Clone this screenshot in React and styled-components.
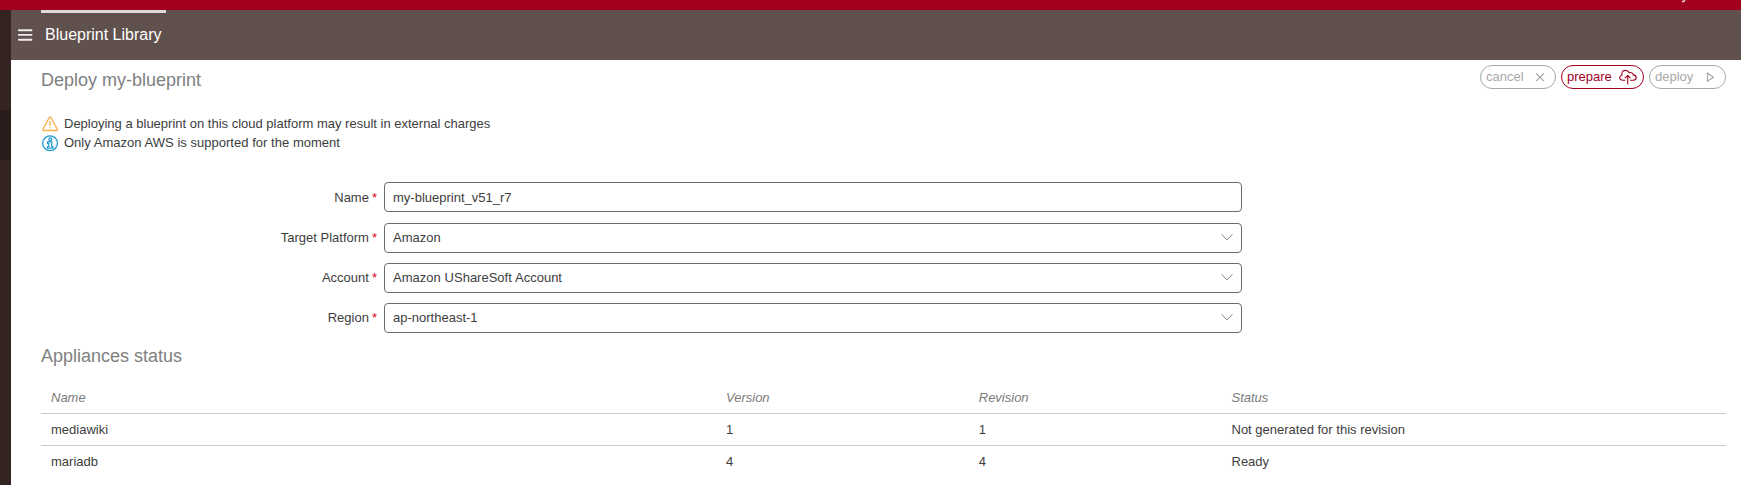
import React from "react";
import styled, { createGlobalStyle } from "styled-components";

const GlobalStyle = createGlobalStyle`
  * { box-sizing: border-box; }
  body {
    margin: 0;
    background: #fff;
    color: #3d3d3d;
    font: 13px/19px "Liberation Sans", Arial, sans-serif;
    overflow: hidden;
  }
`;

const Page = styled.div`
  display: flex;
  flex-direction: column;
  height: 485px;
`;

const TopBar = styled.div`
  display: flex;
  flex: none;
  justify-content: flex-end;
  height: 10px;
  padding-right: 55px;
  background: #a1001f;
  svg { display: block; }
`;

const Body = styled.div`
  display: flex;
  flex: 1;
  min-height: 0;
`;

const SideBar = styled.aside`
  flex: none;
  width: 11px;
  padding-top: 100px;
  background: #332421;
`;

const SideItem = styled.div`
  height: 50px;
  background: #291c1b;
`;

const Main = styled.main`
  flex: 1;
  min-width: 0;
`;

const Header = styled.header`
  display: flex;
  height: 50px;
  padding-left: 6px;
  background: #61514e;
  color: #fff;
`;

const MenuButton = styled.div`
  width: 24px;
  padding-top: 18px;
  svg { display: block; }
`;

const Tab = styled.div`
  width: 125px;
  padding: 10px 0 0 4px;
  border-top: 3px solid #dcdada;
  font-size: 16px;
  line-height: 24px;
  white-space: nowrap;
`;

const Content = styled.div`
  padding: 5px 15px 0 30px;
`;

const TitleRow = styled.div`
  display: flex;
  justify-content: space-between;
  align-items: flex-start;
  height: 49px;
`;

const Title = styled.h1`
  margin: 0;
  padding-top: ${(p) => p.$top || 0}px;
  color: #808080;
  font-size: 18px;
  font-weight: normal;
  line-height: 22px;
`;

const Actions = styled.div`
  display: flex;
  gap: 5px;
`;

const Action = styled.button`
  display: flex;
  align-items: center;
  justify-content: space-between;
  width: ${(p) => p.$width}px;
  height: 24px;
  padding: 0 ${(p) => p.$end}px 1px 5px;
  border: 1px solid currentColor;
  border-radius: 12px;
  background: #fff;
  color: ${(p) => (p.$active ? "#a1001f" : "#a8a8a8")};
  font: inherit;
`;

const Notice = styled.div`
  display: flex;
  align-items: center;
  gap: 5px;
  height: 19px;
  padding-left: 1px;
  word-spacing: ${(p) => p.$wordGap || 0}px;
  svg { display: block; }
`;

const Form = styled.form`
  display: flex;
  flex-direction: column;
  gap: 10px;
  padding-top: 30px;
`;

const Row = styled.div`
  display: flex;
  margin-bottom: ${(p) => (p.$spaced ? 1 : 0)}px;
`;

const Label = styled.label`
  width: 343px;
  padding: ${(p) => (p.$select ? 5 : 6)}px 7px 0 0;
  text-align: right;
`;

const Required = styled.span`
  margin-left: 3px;
  color: #e0001b;
`;

const Field = styled.div`
  display: flex;
  align-items: center;
  justify-content: space-between;
  width: 858px;
  height: 30px;
  padding: 0 8px ${(p) => (p.$select ? 2 : 0)}px 8px;
  border: 1px solid #6c6c6e;
  border-radius: 4px;
  word-spacing: 0.3px;
`;

const Table = styled.table`
  width: 100%;
  margin-top: 15px;
  border-collapse: separate;
  border-spacing: 0;
  table-layout: fixed;
`;

const Cell = styled.td`
  height: 32px;
  padding: 0 11px;
  border-bottom: 1px solid ${(p) => (p.$last ? "transparent" : "#cbcbcb")};
  text-align: left;
  &:first-child { padding-left: 10px; }
`;

const HeadCell = styled(Cell)`
  width: ${(p) => p.$width};
  color: #7b7b7b;
  font-style: italic;
  font-weight: normal;
`;

const MenuIcon = () => (
  <svg width="18" height="14" fill="none" stroke="#efecec" strokeWidth="1.9" strokeLinecap="round">
    <path d="M1.900 2.300h12.600M1.900 6.900h12.600M1.900 11.700h12.600" />
  </svg>
);

const WarningIcon = () => (
  <svg width="17" height="16" fill="none" stroke="#f9b04e" strokeWidth="1.3" strokeLinejoin="round">
    <path d="M7.1 1.900.9 13.2c-.4.8 0 1.300.8 1.300h12.800c.8 0 1.200-.5.8-1.300L9.200 1.900c-.5-.9-1.600-.9-2.100 0Z" />
    <path d="M8.100 5v5M8.100 11.200v1.300" />
  </svg>
);

const InfoIcon = () => (
  <svg width="17" height="18" viewBox="0 0 17 18" fill="none" stroke="#1c99d0">
    <circle cx="8.100" cy="9.200" r="7.400" strokeWidth="1.300" />
    <circle cx="8.300" cy="5.300" r="1.500" strokeWidth="1.200" />
    <path d="M5.600 7.900h4.100v4.600h1.200v1.700H5.600v-1.700h1.200V9.600H5.600Z" strokeWidth="1.200" />
  </svg>
);

const CloseIcon = () => (
  <svg width="10" height="10" fill="none" stroke="currentColor" strokeWidth="1.2">
    <path d="m1.200 1.500 7.600 7.600m0-7.600L1.200 9.100" />
  </svg>
);

const CloudIcon = () => (
  <svg width="18" height="16" fill="none" stroke="currentColor" strokeWidth="1.1" strokeLinejoin="round">
    <path d="M6.200 11.200H4C.100 11.200-.500 7 3 6.300 2.300 2.800 4.300 1.200 6.600 1.400c1.700.1 2.900 1 3.700 2.200 2.200-.6 3.900.500 3.900 2.300 4.100.5 3.700 5 .3 5.300h-3.400" />
    <path d="M8.700 15.200V6.600M5.900 9.200l2.800-2.700 2.800 2.700" />
  </svg>
);

const PlayIcon = () => (
  <svg width="9" height="10" fill="none" stroke="currentColor" strokeWidth="1.2" strokeLinejoin="round">
    <path d="M1.500 1v8.300l6-4.150Z" />
  </svg>
);

const Chevron = () => (
  <svg width="12" height="8" fill="none" stroke="#777" strokeWidth="1">
    <path d="m.7 1.500 5.300 5.300 5.300-5.300" />
  </svg>
);

const fields = [
  { label: "Name", value: "my-blueprint_v51_r7" },
  { label: "Target Platform", value: "Amazon", select: true },
  { label: "Account", value: "Amazon UShareSoft Account", select: true },
  { label: "Region", value: "ap-northeast-1", select: true },
];

const appliances = [
  ["mediawiki", "1", "1", "Not generated for this revision"],
  ["mariadb", "4", "4", "Ready"],
];

export default function App() {
  return (
    <Page>
      <GlobalStyle />
      <TopBar>
        <svg width="5" height="3"><path d="M1 1.500h1.500L4 0" fill="none" stroke="#f3d9dd" strokeWidth="1.300" /></svg>
      </TopBar>
      <Body>
        <SideBar><SideItem /></SideBar>
        <Main>
          <Header>
            <MenuButton><MenuIcon /></MenuButton>
            <Tab>Blueprint Library</Tab>
          </Header>
          <Content>
            <TitleRow>
              <Title $top={4}>Deploy my-blueprint</Title>
              <Actions>
                <Action $width={76} $end={10}>cancel<CloseIcon /></Action>
                <Action $width={83} $end={6} $active>prepare<CloudIcon /></Action>
                <Action $width={77} $end={10}>deploy<PlayIcon /></Action>
              </Actions>
            </TitleRow>
            <Notice><WarningIcon />Deploying a blueprint on this cloud platform may result in external charges</Notice>
            <Notice $wordGap={0.15}><InfoIcon />Only Amazon AWS is supported for the moment</Notice>
            <Form>
              {fields.map((f) => (
                <Row key={f.label} $spaced={!f.select}>
                  <Label $select={f.select}>{f.label}<Required>*</Required></Label>
                  <Field $select={f.select}>{f.value}{f.select && <Chevron />}</Field>
                </Row>
              ))}
            </Form>
            <Title as="h2" $top={12}>Appliances status</Title>
            <Table>
              <thead>
                <tr>
                  <HeadCell as="th" $width="40%">Name</HeadCell>
                  <HeadCell as="th" $width="15%">Version</HeadCell>
                  <HeadCell as="th" $width="15%">Revision</HeadCell>
                  <HeadCell as="th" $width="30%">Status</HeadCell>
                </tr>
              </thead>
              <tbody>
                {appliances.map((row, r) => (
                  <tr key={row[0]}>
                    {row.map((text, c) => (
                      <Cell key={c} $last={r === appliances.length - 1}>{text}</Cell>
                    ))}
                  </tr>
                ))}
              </tbody>
            </Table>
          </Content>
        </Main>
      </Body>
    </Page>
  );
}
